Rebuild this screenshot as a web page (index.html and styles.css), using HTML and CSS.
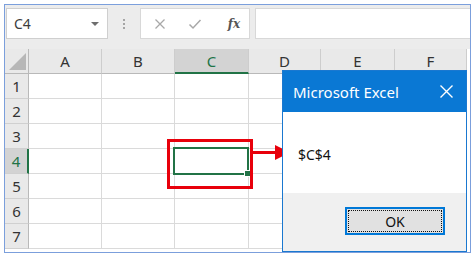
FILE: index.html
```html
<!DOCTYPE html>
<html>
<head>
<meta charset="utf-8">
<link rel="stylesheet" href="styles.css">
</head>
<body>
<div class="frame">
  <div class="fbar">
    <div class="namebox"><span class="nb-text">C4</span><span class="caret"></span></div>
    <div class="vdots"><i></i><i></i><i></i></div>
    <div class="fxbox">
      <svg class="ico" width="12" height="12" viewBox="0 0 12 12"><path d="M1.5 1.5 L10.5 10.5 M10.5 1.5 L1.5 10.5" stroke="#a8a8a8" stroke-width="1.3" fill="none"/></svg>
      <svg class="ico" width="14" height="12" viewBox="0 0 14 12"><path d="M1.5 6.5 L5 10 L12.5 2" stroke="#a8a8a8" stroke-width="1.5" fill="none"/></svg>
      <span class="fx">fx</span>
    </div>
    <div class="finput"></div>
  </div>
  <div class="sheet">
    <div class="hd corner"><svg width="19" height="19" viewBox="0 0 19 19"><polygon points="18,1 18,18 1,18" fill="#b7b7b7"/></svg></div>
    <div class="hd col">A</div>
    <div class="hd col">B</div>
    <div class="hd col sel-col">C</div>
    <div class="hd col">D</div>
    <div class="hd col">E</div>
    <div class="hd col">F</div>

    <div class="hd row">1</div><div class="c"></div><div class="c"></div><div class="c"></div><div class="c"></div><div class="c"></div><div class="c"></div>
    <div class="hd row">2</div><div class="c"></div><div class="c"></div><div class="c"></div><div class="c"></div><div class="c"></div><div class="c"></div>
    <div class="hd row">3</div><div class="c"></div><div class="c"></div><div class="c"></div><div class="c"></div><div class="c"></div><div class="c"></div>
    <div class="hd row sel-row">4</div><div class="c"></div><div class="c"></div><div class="c active"><span class="selbox"><span class="handle"></span></span></div><div class="c"></div><div class="c"></div><div class="c"></div>
    <div class="hd row">5</div><div class="c"></div><div class="c"></div><div class="c"></div><div class="c"></div><div class="c"></div><div class="c"></div>
    <div class="hd row">6</div><div class="c"></div><div class="c"></div><div class="c"></div><div class="c"></div><div class="c"></div><div class="c"></div>
    <div class="hd row">7</div><div class="c"></div><div class="c"></div><div class="c"></div><div class="c"></div><div class="c"></div><div class="c"></div>
  </div>

  <div class="redbox"></div>
  <svg class="arrow" width="40" height="18" viewBox="0 0 40 18"><rect x="0" y="7" width="24" height="3" fill="#e8000b"/><polygon points="22,1 37,8.5 22,16" fill="#e8000b"/></svg>

  <div class="dialog">
    <div class="dtitle">
      <span class="dtitle-text">Microsoft Excel</span>
      <svg class="dclose" width="13" height="13" viewBox="0 0 13 13"><path d="M0.5 0.5 L12.5 12.5 M12.5 0.5 L0.5 12.5" stroke="#ffffff" stroke-width="1.4" fill="none"/></svg>
    </div>
    <div class="dbody">$C$4</div>
    <div class="dfoot">
      <div class="okbtn"><span class="okfocus">OK</span></div>
    </div>
  </div>
</div>
</body>
</html>
```

FILE: styles.css
```css
* { box-sizing: border-box; }
html, body { margin: 0; padding: 0; background: #ffffff; }
body { font-family: "Noto Sans", "Liberation Sans", sans-serif; }

.frame {
  position: relative;
  margin: 4px 0 0 4px;
  width: 467px;
  height: 249px;
  border: 1px solid #7b9fdc;
  background: #ffffff;
  overflow: hidden;
}

.fbar {
  height: 44px;
  background: #ececec;
  display: flex;
  align-items: flex-start;
  padding-top: 3px;
  padding-left: 1px;
}
.namebox {
  width: 102px;
  height: 31px;
  background: #fff;
  border: 1px solid #cfcfcf;
  display: flex;
  align-items: center;
  padding-left: 7px;
  padding-right: 8px;
  justify-content: space-between;
}
.nb-text { font-size: 14px; color: #3c3c3c; }
.caret {
  width: 0; height: 0;
  border-left: 4px solid transparent;
  border-right: 4px solid transparent;
  border-top: 4px solid #6e6e6e;
}
.vdots {
  width: 32px;
  height: 31px;
  display: flex;
  flex-direction: column;
  align-items: center;
  justify-content: center;
  gap: 2px;
}
.vdots i { display: block; width: 2px; height: 2px; background: #a5a5a5; }
.fxbox {
  width: 110px;
  height: 31px;
  background: #fff;
  border: 1px solid #d8d8d8;
  display: flex;
  align-items: center;
  padding-left: 13px;
  gap: 22px;
}
.fx {
  font-family: "DejaVu Serif", "Liberation Serif", serif;
  font-style: italic;
  font-weight: bold;
  font-size: 12px;
  color: #555;
  margin-left: 4px;
}
.finput {
  margin-left: 5px;
  width: 216px;
  height: 31px;
  background: #fff;
  border: 1px solid #d8d8d8;
  border-right: none;
}

.sheet {
  display: grid;
  grid-template-columns: 24px 73px 73px 74px 72px 74px 72px;
  grid-template-rows: repeat(8, 25px);
}
.hd {
  background: #e9e9e9;
  color: #333;
  font-size: 15px;
  display: flex;
  align-items: center;
  justify-content: center;
}
.col { border-right: 1px solid #cdcdcd; border-bottom: 1px solid #b9b9b9; }
.corner { border-right: 1px solid #b9b9b9; border-bottom: 1px solid #b9b9b9; justify-content: flex-start; align-items: flex-end; padding: 0 0 2px 3px; }
.row { border-right: 1px solid #b9b9b9; border-bottom: 1px solid #d0d0d0; }
.sel-col { background: #d3d3d3; border-bottom: 2px solid #217346; color: #217346; }
.sel-row { background: #d3d3d3; border-right: 2px solid #217346; color: #217346; }
.c { border-right: 1px solid #dadada; border-bottom: 1px solid #dadada; }
.active { position: relative; }
.selbox {
  position: absolute;
  left: -2px; top: -2px; right: -1px; bottom: -2px;
  border: 2px solid #217346;
}
.handle {
  position: absolute;
  right: -4px; bottom: -4px;
  width: 7px; height: 7px;
  background: #217346;
  border: 1px solid #fff;
}

.redbox {
  position: absolute;
  left: 162px; top: 134px;
  width: 86px; height: 50px;
  border: 3px solid #e8000b;
}
.arrow {
  position: absolute;
  left: 248px; top: 139px;
}

.dialog {
  position: absolute;
  left: 277px; top: 65px;
  width: 185px; height: 182px;
  border: 1px solid #1a78d0;
  display: flex;
  flex-direction: column;
  background: #fff;
}
.dtitle {
  height: 41px;
  background: #0a78d4;
  display: flex;
  align-items: center;
  justify-content: space-between;
  padding: 0 13px 0 10px;
  color: #fff;
}
.dtitle-text { font-size: 15px; }
.dbody {
  height: 81px;
  display: flex;
  align-items: center;
  padding: 4px 0 0 15px;
  font-size: 14px;
  color: #111;
}
.dfoot {
  flex: 1;
  background: #f0f0f0;
  display: flex;
  justify-content: flex-end;
  align-items: flex-start;
  padding: 14px 21px 0 0;
}
.okbtn {
  width: 100px; height: 28px;
  border: 2px solid #0078d7;
  background: #e1e1e1;
  padding: 1px;
  display: flex;
}
.okfocus {
  flex: 1;
  border: 1px dotted #111;
  display: flex;
  align-items: center;
  justify-content: center;
  font-size: 14px;
  color: #111;
}
```
